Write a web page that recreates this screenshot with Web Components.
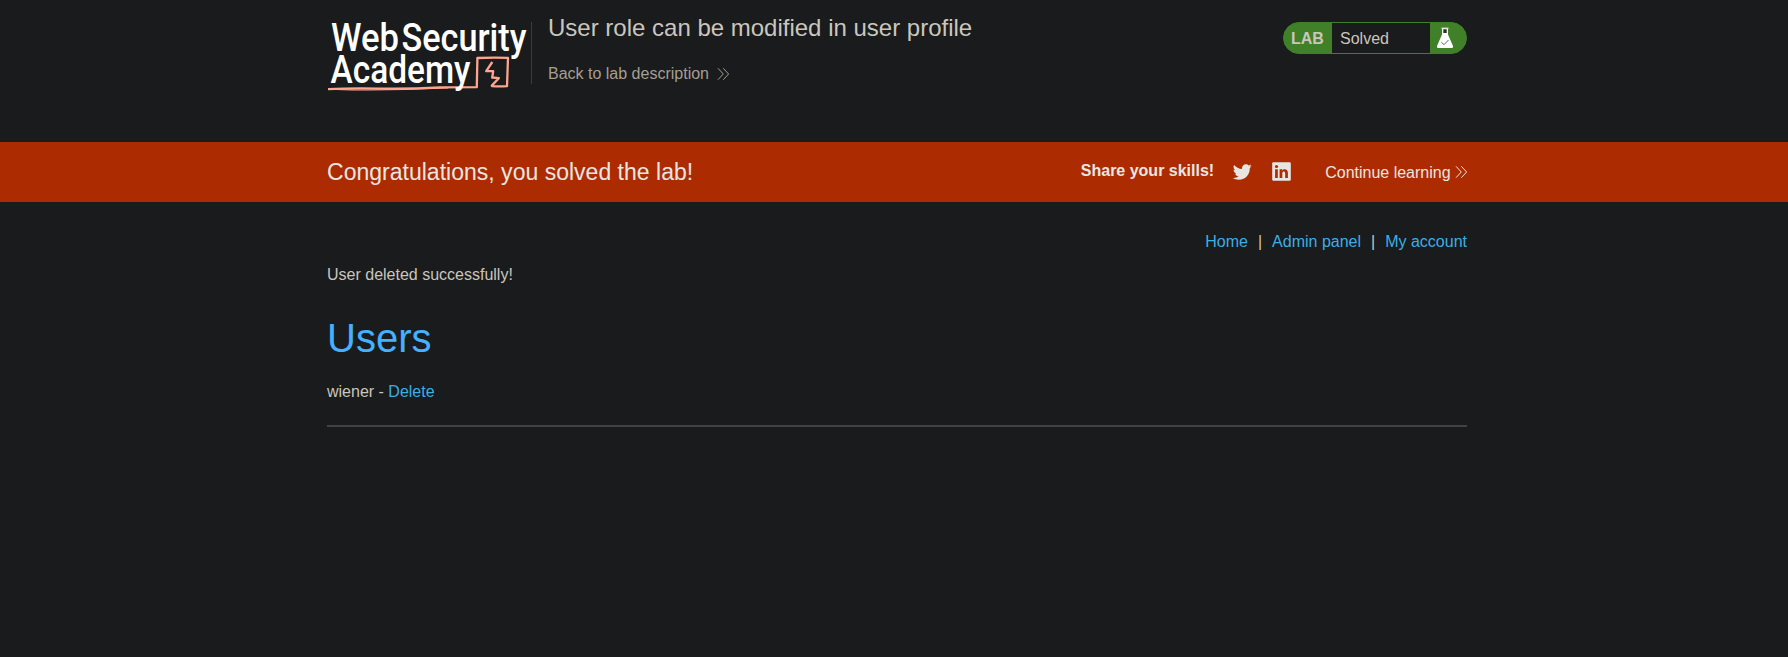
<!DOCTYPE html>
<html lang="en">
<head>
<meta charset="utf-8">
<title>User role can be modified in user profile</title>
<style>
html,body{margin:0;background:#191b1c}
body{min-height:657px;color:#cbc6bd;font:16px/18px "Liberation Sans",Arial,sans-serif}
</style>
</head>
<body>
<lab-page></lab-page>
<script>
const define = (name, html) => customElements.define(name, class extends HTMLElement {
  constructor() {
    super();
    this.attachShadow({mode: 'open'}).innerHTML = html;
  }
});

define('chevron-pair', `<style>:host{display:block;width:13px;height:14px}svg{display:block}</style>
<svg width="13" height="14" viewBox="0 0 13 14" fill="none" stroke="currentColor" stroke-width="1"><path d="M1 1.3 6.3 7 1 12.7M6.3 1.3 11.6 7 6.3 12.7"/></svg>`);

define('academy-logo', `<style>:host{display:block;width:204px;height:76px}svg{display:block;overflow:visible}
text{font-family:Roboto,"Liberation Sans",sans-serif;font-weight:500;font-size:38.5px;fill:#fff}</style>
<svg width="204" height="76" viewBox="327 18 204 76">
<path d="M328 89.2Q350 88 380 88.6T440 87.3L476.8 87.2 477.4 58Q492 57.2 508 57.8L507 86.2Q499 86.6 492 86.2L491.8 85.6 498.8 78.2 492.2 77.5 493.2 71.2 486.2 71.2 492.3 62" fill="none" stroke="#ffa58f" stroke-width="2.3" stroke-linejoin="round"/>
<path d="M328 88.4Q370 90.8 448 87.4L448 88.6Q380 91.5 336 90Z" fill="#ffa58f"/>
<text x="331" y="50.5" textLength="68" lengthAdjust="spacingAndGlyphs">Web</text>
<text x="401.5" y="50.5" textLength="125" lengthAdjust="spacingAndGlyphs">Security</text>
<text x="330.5" y="83" textLength="140" lengthAdjust="spacingAndGlyphs">Academy</text>
</svg>`);

define('lab-status', `<style>
:host{display:flex;box-sizing:border-box;width:184px;height:32px;border:1px solid #3f8029;border-radius:16px;overflow:hidden;background:#3f8029}
.l{width:48px;padding:7px 0 0 7px;box-sizing:border-box;font-weight:bold}
.s{width:98px;padding:7px 0 0 8px;box-sizing:border-box;background:#191b1c}
svg{display:block;margin:4px 0 0 6px}
</style><span class="l">LAB</span><span class="s">Solved</span>
<svg width="18" height="22" viewBox="0 0 18 22"><path d="M6 1.5H12V7.5L16.8 18.5Q17.6 21 15.8 21H2.2Q.4 21 1.2 18.5L6 7.5Z" fill="#fff"/><path d="M5.5 1.2H12.5" stroke="#fff" stroke-width="1"/><path d="M7.3 2.3H10.7V6H7.3Z" fill="#26331f"/><path d="M5.3 15.2 8 17.7 12.5 13" fill="none" stroke="#57734a" stroke-width="1"/></svg>`);

define('lab-header', `<style>
:host{display:flex;box-sizing:border-box;width:1140px;height:142px;padding-top:18px;margin-left:327px}
.info{margin-top:4px;height:62px;padding-left:16px;border-left:1px solid #3a3d3f;flex:1}
h2{margin:-8px 0 0;font-weight:normal;font-size:24px;line-height:28px}
a{display:flex;margin-top:23px;color:#a69e92}chevron-pair{margin:2px 0 0 8px}
lab-status{margin-top:4px}
</style><academy-logo></academy-logo><div class="info"><h2>User role can be modified in user profile</h2><a>Back to lab description<chevron-pair></chevron-pair></a></div><lab-status></lab-status>`);

define('share-links', `<style>:host{display:flex}svg{display:block}svg+svg{margin-left:20px}</style>
<svg width="20" height="20" viewBox="0 0 24 24" fill="#e8e6e3"><path d="M23.643 4.937c-.835.37-1.732.62-2.675.733.962-.576 1.7-1.49 2.048-2.578-.9.534-1.897.922-2.958 1.13-.85-.904-2.06-1.47-3.4-1.47-2.572 0-4.658 2.086-4.658 4.66 0 .364.042.718.12 1.06-3.873-.195-7.304-2.05-9.602-4.868-.4.69-.63 1.49-.63 2.342 0 1.616.823 3.043 2.072 3.878-.764-.025-1.482-.234-2.11-.583v.06c0 2.257 1.605 4.14 3.737 4.568-.392.106-.803.162-1.227.162-.3 0-.593-.028-.877-.082.593 1.85 2.313 3.198 4.352 3.234-1.595 1.25-3.604 1.995-5.786 1.995-.376 0-.747-.022-1.112-.065 2.062 1.323 4.51 2.093 7.14 2.093 8.57 0 13.255-7.098 13.255-13.254 0-.2-.005-.402-.014-.602.91-.658 1.7-1.477 2.323-2.41z"/></svg>
<svg width="19" height="19" viewBox="0 0 19 19"><rect x=".2" y=".2" width="18.6" height="18.6" rx="1.2" fill="#e8e6e3"/><g fill="#ad2b01"><circle cx="4.5" cy="4.5" r="1.6"/><path d="M3.1 7.3h2.7v8.6H3.1zM7.6 7.3h2.6v1.2c1.2-2 5.7-1.9 5.7 2.2v5.2h-2.7v-4.5c0-2.8-2.9-2.4-2.9-.1v4.6H7.6z"/></g></svg>`);

define('solved-banner', `<style>
:host{display:block;height:60px;background:#ad2b01;color:#e8e6e3}
.in{width:1140.6px;margin-left:327px;display:flex;align-items:flex-start}
.c{font-size:23.04px;line-height:26px;margin:17px auto 0 0}
b{margin-top:20px}share-links{margin:20px 0 0 18px}.n{display:flex;margin:22px 0 0 34px}chevron-pair{margin:1px 0 0 4px}
</style><div class="in"><span class="c">Congratulations, you solved the lab!</span><b>Share your skills!</b><share-links></share-links><a class="n">Continue learning<chevron-pair></chevron-pair></a></div>`);

define('lab-nav', `<style>:host{display:flex;justify-content:flex-end;gap:10px}a{color:#3daee4}</style>
<a>Home</a><span>|</span><a>Admin panel</a><span>|</span><a>My account</a>`);

define('user-list', `<style>:host{display:block}
h1{margin:31px 0 0;font-weight:normal;font-size:40px;line-height:46px;color:#45b0ff}
p{margin:0}.u{margin-top:22px}a{color:#3daee4}
hr{border:0;height:2px;background:#3e4446;margin:24px 0 0}</style>
<p>User deleted successfully!</p><h1>Users</h1><p class="u">wiener - <a>Delete</a></p><hr>`);

define('lab-page', `<style>:host{display:block}main{width:1140px;margin-left:327px;padding-top:31px}user-list{margin-top:15px}</style>
<lab-header></lab-header><solved-banner></solved-banner><main><lab-nav></lab-nav><user-list></user-list></main>`);
</script>
</body>
</html>
